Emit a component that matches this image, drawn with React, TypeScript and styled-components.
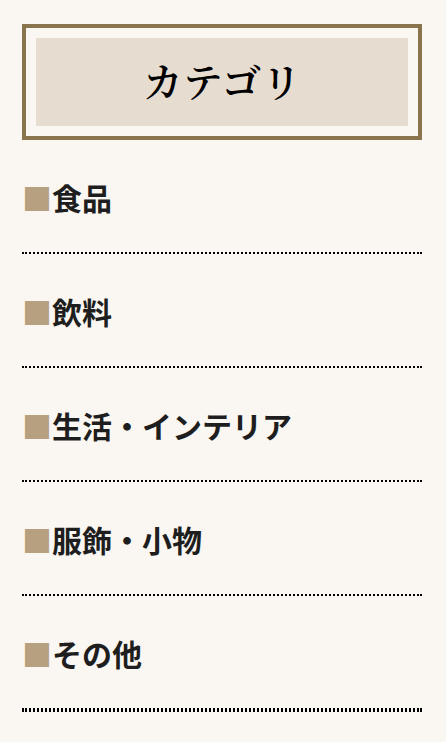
import React from "react";
import styled, { createGlobalStyle } from "styled-components";

const GlobalStyle = createGlobalStyle`
  *, *::before, *::after { box-sizing: border-box; }
  body { margin: 0; background: #faf7f2; }
`;

const Sidebar = styled.aside`
  padding: 24px 24px 30px 22px;
  color: #1e1e1e;
  font-family: "Noto Sans CJK JP", sans-serif;
`;

const HeadingFrame = styled.div`
  padding: 10px;
  border: 4px solid #89744d;
`;

const Heading = styled.h2`
  margin: 0;
  padding-bottom: 4px;
  background: #e6dcd0;
  color: #000;
  font-family: "Noto Serif CJK JP", "Noto Sans CJK JP", serif;
  font-size: 40px;
  font-weight: 600;
  line-height: 84px;
  text-align: center;
`;

const CategoryList = styled.ul`
  margin: 0;
  padding: 0;
  list-style: none;
  border-bottom: 2px dotted #000;
`;

const CategoryItem = styled.li`
  border-bottom: 2px dotted #000;
`;

const CategoryLink = styled.a`
  display: block;
  padding: 35px 0 33px;
  color: inherit;
  font-size: 30px;
  font-weight: 700;
  line-height: 44px;
  text-decoration: none;

  &::before {
    content: "■";
    color: #b7a080;
  }
`;

const categories = ["食品", "飲料", "生活・インテリア", "服飾・小物", "その他"];

export default function App() {
  return (
    <Sidebar>
      <GlobalStyle />
      <HeadingFrame>
        <Heading>カテゴリ</Heading>
      </HeadingFrame>
      <nav aria-label="カテゴリ">
        <CategoryList>
          {categories.map((name) => (
            <CategoryItem key={name}>
              <CategoryLink href="#">{name}</CategoryLink>
            </CategoryItem>
          ))}
        </CategoryList>
      </nav>
    </Sidebar>
  );
}
